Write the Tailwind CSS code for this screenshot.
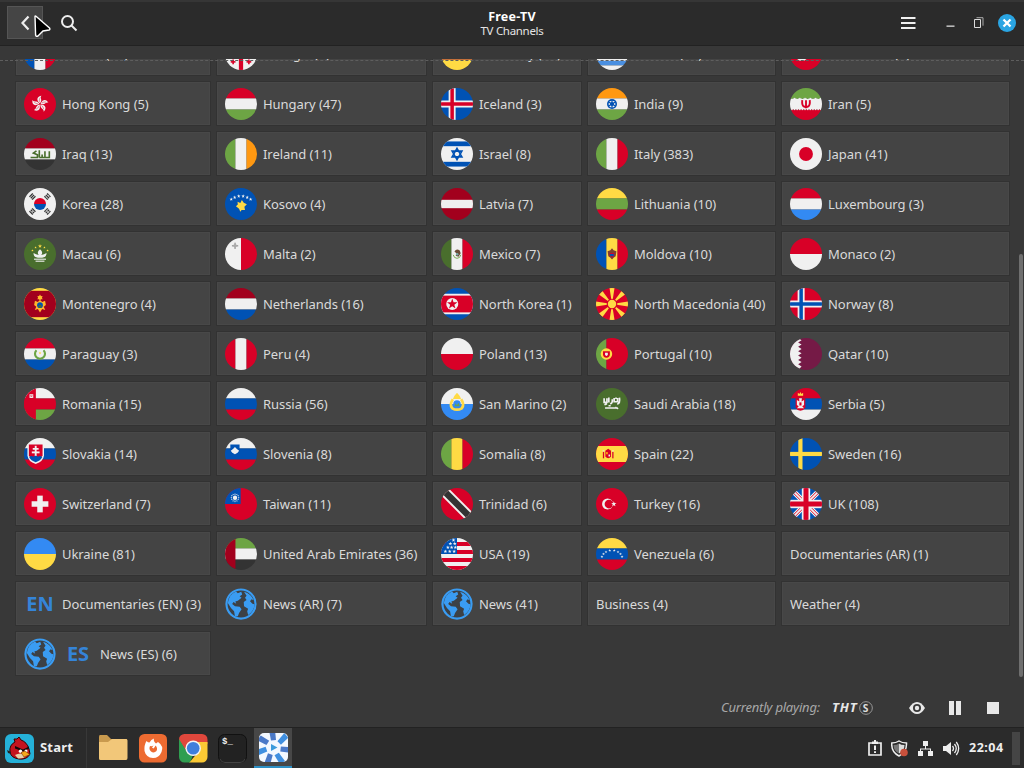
<!DOCTYPE html>
<html lang="en">
<head>
<meta charset="utf-8">
<title>Free-TV</title>
<script src="https://cdn.jsdelivr.net/npm/@tailwindcss/browser@4"></script>
</head>
<body class="w-[1024px] h-[768px] overflow-hidden bg-[#383838] font-['Noto_Sans','Liberation_Sans',sans-serif] text-[#dadada] flex flex-col">

<header class="h-[46px] shrink-0 bg-[#2b2b2b] border-t-2 border-t-[#363636] border-b border-b-[#222] grid grid-cols-[1fr_auto_1fr] items-center">
  <div class="flex items-center h-full pl-[7px] pb-[2px]">
    <button class="relative w-[36px] h-[33px] bg-[#454545] border border-[#555] flex items-center justify-center">
      <svg class="w-4 h-4" viewBox="0 0 16 16" fill="none" stroke="#eee" stroke-width="2.2"><path d="M11.500 1.500 5.500 8 11.500 14.500"/></svg>
      <svg class="absolute left-[25px] top-[7px] w-[20px] h-[26px]" viewBox="0 0 20 26"><path d="M2 2.500Q2 1.500 3 2.200L16.500 14Q17.500 15.500 16 16L10 17 5 22Q3 23 2.600 21Z" fill="#000" stroke="#fff" stroke-width="1.400"/></svg>
    </button>
    <svg class="ml-[17px] w-[18px] h-[18px]" viewBox="0 0 18 18" fill="none" stroke="#eee" stroke-width="2"><circle cx="7.500" cy="7.500" r="5.500"/><path d="m11.500 11.500 5 5"/></svg>
  </div>
  <div class="text-center">
    <div class="text-[12.500px] leading-[14px] font-bold tracking-[0.25px] text-white">Free-TV</div>
    <div class="text-[11.500px] leading-[14px] tracking-[-0.3px] text-[#e4e4e4]">TV Channels</div>
  </div>
  <div class="flex items-center justify-end pr-[8px] h-full pb-[2px]">
    <svg class="w-[15px] h-[12px] mr-[30px]" viewBox="0 0 15 12" fill="#f0f0f0"><path d="M0 0h14.500v2H0zM0 5h14.500v2H0zM0 10h14.500v2H0z"/></svg>
    <svg class="w-[9px] h-[10px] mr-[18px]" viewBox="0 0 9 10" fill="#ddd"><path d="M0.500 7.500h8v1.300h-8z"/></svg>
    <svg class="w-[11px] h-[12px] mr-[14px]" viewBox="0 0 11 12" fill="none" stroke="#ddd"><path d="M1.500 2.500h6v8h-6z"/><path d="M3.500 .7h6.500v8" stroke="#aaa"/></svg>
    <svg class="w-[18px] h-[18px]" viewBox="0 0 18 18"><circle cx="9" cy="9" r="9" fill="#2aa5e3"/><path d="m5.500 5.500 7 7m0-7-7 7" stroke="#fff" stroke-width="2.300"/></svg>
  </div>
</header>

<main class="flex-1 min-h-0 pt-[13px] flex flex-col">
  <div class="relative h-[625px] overflow-hidden pl-4">
    <div class="absolute inset-x-0 top-[1px] border-t border-dashed border-[#5e5e5e]"></div>
    <div id="grid" class="-mt-[27px] grid grid-cols-[194px_209px_148px_187px_227px] auto-rows-[43px] gap-[7px]"></div>
    <div class="absolute right-[1px] top-[195px] w-[4px] h-[423px] rounded-full bg-[#6f6f6f]"></div>
  </div>
  <div class="flex-1 flex items-center justify-end pr-[25px] pt-[5px]">
    <span class="text-[13px] italic text-[#a8a8a8] w-[99px] whitespace-nowrap tracking-[-0.2px]">Currently playing:</span>
    <span class="ml-[12px] w-[43px] text-[13px] italic font-bold text-[#e6e6e6] whitespace-nowrap tracking-[0.8px] flex items-center gap-[2px]">THT
      <svg class="w-[14px] h-[14px] shrink-0" viewBox="0 0 13 13"><circle cx="6.500" cy="6.500" r="5.900" fill="none" stroke="#999" stroke-width=".9"/><text x="3.500" y="10" font-size="9.500" font-style="normal" font-weight="bold" letter-spacing="0" fill="#ddd">S</text></svg></span>
    <svg class="ml-[34px] w-[16px] h-[14px]" viewBox="0 0 16 14"><path d="M0 7Q3.500 1 8 1t8 6Q12.500 13 8 13T0 7Z" fill="#e8e8e8"/><circle cx="8" cy="7" r="4" fill="#383838"/><circle cx="8" cy="7" r="2.200" fill="#e8e8e8"/></svg>
    <svg class="ml-[24px] w-[12px] h-[14px]" viewBox="0 0 12 14" fill="#e8e8e8"><path d="M0 0h5v14H0zM7 0h5v14H7z"/></svg>
    <svg class="ml-[26px] w-[12px] h-[12px]" viewBox="0 0 12 12" fill="#e8e8e8"><path d="M0 0h12v12H0z"/></svg>
  </div>
</main>

<footer class="h-[41px] shrink-0 bg-[#2b2b2b] border-t border-[#222] flex items-center">
  <svg class="ml-[5px] w-[29px] h-[29px]" viewBox="0 0 29 29"><rect width="29" height="29" rx="6" fill="#25b1d8"/><path d="M5 18Q4 11 10 8L9 5 12 5 14 3 16 6Q22 8 24 15L25 20Q22 26 14 25 6 24 5 18Z" fill="#c4141f" stroke="#300" stroke-width="1"/><path d="M10 21Q15 18 22 21 19 25 13 24.500Z" fill="#e8d0a8"/><path d="M10 12 18 15.500 24 12.500 24 14.500 18 17.500 10 14.500Z" fill="#140808"/><circle cx="15.500" cy="17.300" r="1.700" fill="#fff"/><circle cx="21" cy="17" r="1.500" fill="#fff"/><path d="M16 18.500 20 17 25 20.500 19 23Z" fill="#f5a81c" stroke="#5a2a00" stroke-width=".5"/><path d="m2 16 4 2v2l-3-1z" fill="#222"/></svg>
  <span class="ml-[6px] w-[46px] text-[13px] font-bold tracking-[0.2px] text-[#eee]">Start</span>
  <div class="w-px h-full bg-[#383838]"></div>
  <svg class="ml-[12px] w-[29px] h-[29px]" viewBox="0 0 29 29"><path d="M0 3Q0 1 1 1H8L12 5H28V12H0Z" fill="#c99a4e"/><path d="M0 8H9L13 5H27Q28.500 5 28.500 6.500V24Q28.500 26 27 26H1.500Q0 26 0 24.500Z" fill="#f2c779"/></svg>
  <svg class="ml-[11px] w-[29px] h-[29px]" viewBox="0 0 29 29"><rect width="28" height="28.500" rx="5.500" fill="#ed6b31"/><path d="M7.500 7Q9 8.500 10.500 8.500 12 5.500 15 4.500 14 7 17 9.500L19 8Q25 12 22.500 18 20 24 14 24 7 23.500 5.500 17 5 11 7.500 7Z" fill="#fff"/><path d="M11 12Q13 12.500 14.500 11.500L13 13.500Q13.500 14 14.500 14.500 16 13 16.500 11.500 19 14 17.500 17 15 19.500 12 17.500 9.500 15 11 12Z" fill="#ed6b31"/></svg>
  <svg class="ml-[11px] w-[29px] h-[29px]" viewBox="0 0 29 29"><defs><clipPath id="cr"><rect width="28.500" height="28.500" rx="5.500"/></clipPath></defs><g clip-path="url(#cr)"><path d="M0 0H29V10H14L7 17 0 6Z" fill="#e0473c"/><path d="M0 5 8 18 14 21 11 29H0Z" fill="#2f9e50"/><path d="M14 8H29V29H10L20 17Z" fill="#fbc934"/></g><circle cx="14.200" cy="14.200" r="7.800" fill="#f4f4f4"/><circle cx="14.200" cy="14.200" r="6.300" fill="#3f7fdc"/></svg>
  <svg class="ml-[10px] w-[29px] h-[29px]" viewBox="0 0 29 29"><rect x=".5" y=".5" width="28" height="28" rx="6" fill="#222" stroke="#111"/><path d="M2 25Q3 28.500 7 28.500H22Q26 28.500 27 25" fill="none" stroke="#444"/><text x="4" y="9.500" font-size="9" font-weight="bold" fill="#eee" font-family="Liberation Mono">$_</text></svg>
  <div class="ml-[7px] w-[38px] h-full bg-[#474747] border-b-2 border-[#2d8fc4] flex justify-center items-center">
    <svg class="w-[29px] h-[29px]" viewBox="0 0 29 29"><defs><clipPath id="hy"><rect width="29" height="29" rx="5"/></clipPath></defs><g clip-path="url(#hy)"><path d="M0 0H29V29H0Z" fill="#f3f8ff"/><g id="blades"></g><path d="m12 11 6.500 3.500-6.500 3.500z" fill="#3c9bdc"/></g></svg>
  </div>
  <div class="flex-1"></div>
  <svg class="w-[14px] h-[16px]" viewBox="0 0 14 16"><path d="M1 3H13V15H1Z" fill="none" stroke="#eee" stroke-width="1.700"/><path d="M4 1.500H6V0H8V1.500H10V4H4Z" fill="#eee"/><path d="M6 5.500H8V10H6ZM6 11.200H8V13H6Z" fill="#eee"/></svg>
  <svg class="ml-[9px] w-[18px] h-[17px]" viewBox="0 0 18 17"><path d="M8 1Q11 3 15.500 3 16 12 8 16 0 12 .8 3 5 3 8 1Z" fill="none" stroke="#eee" stroke-width="1.500"/><path d="M8 3.500Q10 5 13.500 5 13.500 11 8 13.500Z" fill="#ddd"/><path d="M8 3.500Q6 5 2.500 5 2.500 11 8 13.500Z" fill="#777"/><circle cx="13" cy="12.500" r="3.800" fill="#c9513c"/></svg>
  <svg class="ml-[9px] w-[15px] h-[15px]" viewBox="0 0 15 15" fill="#eee"><path d="M5 0h5v5H5zM0 10h5v5H0zM10 10h5v5h-5zM7 5h1v2.500h5V10h-1V8.500H3V10H2V7.500h5z"/></svg>
  <svg class="ml-[10px] w-[17px] h-[15px]" viewBox="0 0 17 15"><path d="M0 5H3L8 1V14L3 10H0Z" fill="#eee"/><path d="M9.500 5Q11.500 7.500 9.500 10M11.500 3Q15 7.500 11.500 12M13.300 1Q18 7.500 13.300 14" fill="none" stroke="#eee" stroke-width="1.300"/></svg>
  <span class="ml-[9px] w-[36px] text-[12.500px] font-bold tracking-[0.5px] text-[#eee] whitespace-nowrap">22:04</span>
  <div class="ml-[7px] mr-[4px] w-[8px] h-[33px] bg-[#454545]"></div>
</footer>

<script>
const R='#d80027',W='#f0f0f0',G='#6da544',B='#0052b4',Y='#ffda44',O='#ff9811',D='#a2001d',L='#338af3',F='#496e2d',K='#333';
const r=(x,y,w,h,c)=>`<rect x="${x}" y="${y}" width="${w}" height="${h}" fill="${c}"/>`;
const bg=c=>r(0,0,512,512,c);
const h3=(a,b,c)=>r(0,0,512,168,a)+r(0,167,512,178,b)+r(0,345,512,167,c);
const v3=(a,b,c)=>r(0,0,168,512,a)+r(167,0,178,512,b)+r(345,0,167,512,c);
const h2=(a,b)=>r(0,0,512,256,a)+r(0,256,512,256,b);
const ci=(x,y,q,c)=>`<circle cx="${x}" cy="${y}" r="${q}" fill="${c}"/>`;
const p=(d,c)=>`<path d="${d}" fill="${c}"/>`;
const l=(d,c,w)=>`<path d="${d}" fill="none" stroke="${c}" stroke-width="${w}"/>`;
const star=(x,y,q,c,n=5,k=.4)=>{let s='';for(let i=0;i<2*n;i++){const a=Math.PI*i/n-Math.PI/2,t=i%2?q*k:q;s+=`${(x+t*Math.cos(a)).toFixed(1)},${(y+t*Math.sin(a)).toFixed(1)} `}return `<polygon points="${s}" fill="${c}"/>`};
const rot=(n,f)=>Array.from({length:n},(_,i)=>`<g transform="rotate(${i*360/n} 256 256)">${f}</g>`).join('');
const nordic=(a,b,c)=>bg(a)+r(122,0,112,512,b)+r(0,200,512,112,b)+r(150,0,56,512,c)+r(0,228,512,56,c);
const barbs=(x,y,a,b)=>`<g transform="rotate(${a} ${x} ${y})">`+[-30,0,30].map((d,i)=>r(x-38,y+d-10,76,20,K)+(b&(1<<i)?r(x-5,y+d-10,10,20,W):'')).join('')+'</g>';

const flags={
fr:v3(B,W,R),
ge:bg(W)+r(222,0,68,512,R)+r(0,222,512,68,R)+[130,382].map(x=>[130,382].map(y=>r(x-38,y-13,76,26,R)+r(x-13,y-38,26,76,R)).join('')).join(''),
de:h3(K,R,Y),
gr:Array.from({length:7},(_,i)=>r(0,i*73.2,512,74,i%2?'#4a8fe0':W)).join(''),
gl:h2(W,R)+ci(190,256,110,R)+p('M80 256a110 110 0 0 0 220 0z',W),
hk:bg(R)+rot(5,p('M250 240C190 190 210 130 280 122 245 155 305 185 256 245Z',W)+l('M250 220C240 190 250 170 258 155',R,7)),
hu:h3(R,W,G),
is:nordic(B,W,R),
in:h3(O,W,G)+ci(256,256,80,B)+ci(256,256,54,W)+ci(256,256,32,B)+rot(6,r(250,195,12,122,B)),
ir:h3(G,W,R)+Array.from({length:12},(_,i)=>r(20+i*42,158,22,18,i%2?W:G)+r(20+i*42,336,22,18,W)).join('')+l('M196 195Q185 285 230 300H282Q327 285 316 195M256 195V325',R,30),
iq:h3(D,W,K)+l('M105 312H215V270L150 240 200 205M245 195V312M245 312H335M335 210V312M290 265V312M335 312H405V210',F,26),
ie:v3(G,W,O),
il:bg(W)+r(0,55,512,76,B)+r(0,381,512,76,B)+l('M256 165 335 302H177ZM256 347 177 210H335Z',B,25),
it:v3(G,W,R),
jp:bg(W)+ci(256,256,111,R),
kr:bg(W)+p('M160 256a96 96 0 0 1 192 0z',R)+p('M160 256a96 96 0 0 0 192 0z',B)+barbs(135,137,-45,0)+barbs(375,137,45,5)+barbs(135,375,45,2)+barbs(375,375,-45,7),
xk:bg(B)+[[100,180],[155,150],[220,130],[290,130],[355,150],[410,180]].map(a=>star(a[0],a[1],30,W)).join('')+p('M200 220 245 240 270 190 300 235 350 260 310 300 320 350 265 350 245 380 225 330 175 290 205 265Z',Y),
lv:bg(D)+r(0,189,512,134,W),
lt:h3(Y,G,R),
lu:h3(R,W,L),
mo:bg(F)+p('M256 180Q315 225 275 272 325 265 360 240 360 310 290 315H222Q152 310 152 240 190 265 237 272 197 225 256 180Z',W)+r(160,330,192,18,W)+r(185,362,142,18,W)+star(256,130,34,Y)+star(185,150,20,Y)+star(327,150,20,Y)+star(135,200,20,Y)+star(377,200,20,Y),
mt:r(0,0,256,512,W)+r(256,0,256,512,R)+r(150,75,22,100,'#999')+r(111,114,100,22,'#999')+ci(161,125,28,'#aaa'),
mx:v3(F,W,R)+l('M195 270Q210 325 256 325 305 325 317 270',G,14)+p('M215 220Q245 160 300 200L315 245 280 300 235 285 250 245Z','#6b4a35')+ci(260,260,20,'#7aa'),
md:v3(B,Y,R)+p('M185 210 230 195 256 165 282 195 327 210 315 290 285 310 256 345 227 310 197 290Z','#7f3f33')+p('M220 240H292V280L256 315 220 280Z',R)+r(225,255,60,35,B),
mc:h2(R,W),
me:bg(Y)+r(0,45,512,422,D)+star(256,155,50,'#ffb72b',6,.6)+p('M175 205 220 225 256 190 292 225 337 205 350 270 315 300 340 350 290 335 256 390 222 335 172 350 197 300 162 270Z','#ffb72b')+ci(256,275,46,B)+ci(256,293,24,F),
nl:h3(D,W,B),
kp:bg(B)+r(0,92,512,328,W)+r(0,122,512,268,R)+ci(180,256,96,W)+star(180,256,88,R),
mk:bg(R)+rot(8,p('M256 256 216 0H296Z',Y))+ci(256,256,85,R)+ci(256,256,67,Y),
no:nordic(R,W,B),
py:h3(R,W,B)+l('M200 195A80 80 0 1 0 312 195',G,34)+star(256,240,25,Y),
pe:v3(R,W,R),
pl:h2(W,R),
pt:r(0,0,168,512,G)+r(167,0,345,512,R)+ci(167,256,92,Y)+p('M112 210H222V265Q220 312 167 316 114 312 112 265Z',R)+p('M145 235H189V265Q185 285 167 289 149 285 145 265Z',W),
qa:bg('#751a46')+p('M0 0H130L185 35 130 70 185 105 130 140 185 175 130 210 185 245 130 280 185 315 130 350 185 385 130 420 185 455 130 512H0Z',W),
om:h3(W,R,G)+r(0,0,190,512,R)+r(88,100,60,60,W)+l('M100 112 136 148M136 112 100 148',R,8),
ru:h3(W,B,R),
sm:h2(W,L)+l('M190 180Q130 265 180 325 256 370 332 325 382 265 322 180',Y,44)+p('M190 175 215 125 256 75 297 125 322 175Z',Y)+ci(256,256,60,L)+p('M215 290 235 245 256 280 277 235 300 290Z',G),
sa:bg(F)+l('M130 165V230H175V165M205 150V230M225 250Q268 250 260 180M290 160V220H345V160M375 155Q390 245 340 260M135 268 175 250M320 150V175',W,27)+l('M145 320H350M310 305Q345 340 350 318M200 285H235',W,24),
rs:h3(R,B,W)+p('M90 165H245V310Q225 350 167 365 108 350 90 310Z',R)+p('M110 190 150 215 145 165H190L185 215 225 190V270L195 290 225 325H110L140 290 110 270Z',W)+p('M125 75 150 95 167 65 184 95 210 75V125H125Z',Y)+r(150,230,34,50,R),
sk:h3(W,B,R)+p('M55 90H320V280Q310 375 187 415 65 375 55 280Z',W)+p('M78 102H297V280Q290 315 187 325 85 315 78 280Z',R)+r(172,125,30,165,W)+r(140,160,94,28,W)+r(125,215,124,30,W)+p('M82 305Q120 275 150 300 187 265 224 300 255 275 292 305 265 365 187 388 110 365 82 305Z',B),
si:h3(W,B,R)+p('M85 105H233V185Q225 240 159 260 95 240 85 185Z',B)+p('M92 205 128 175 159 145 190 175 226 205Q210 240 159 260 108 240 92 205Z',W),
ml:v3(G,Y,R),
es:bg(R)+r(0,128,512,256,Y)+r(110,220,20,105,R)+r(260,220,20,105,R)+p('M150 205 195 170 240 205V300Q195 345 150 300Z',R)+r(160,225,30,35,O)+r(200,265,25,30,W)+r(105,200,30,15,W)+r(255,200,30,15,W),
se:bg(B)+r(133,0,67,512,Y)+r(0,222,512,67,Y),
ch:bg(R)+r(212,122,88,268,W)+r(122,212,268,88,W),
tw:bg(R)+r(0,0,250,256,B)+star(160,155,75,W,12,.65)+ci(160,155,50,B)+ci(160,155,35,W),
tt:bg(R)+l('M20 20 492 492',W,165)+l('M20 20 492 492',K,104),
tr:bg(R)+ci(185,256,88,W)+ci(208,256,70,R)+star(285,256,45,W),
gb:bg(B)+l('M0 0 512 512M512 0 0 512',W,86)+l('M-14 14 498 526M14 -14 526 498M526 14 14 526M498 -14 -14 498',R,15)+r(189,0,134,512,W)+r(0,189,512,134,W)+r(216,0,80,512,R)+r(0,216,512,80,R),
ua:h2(L,Y),
ae:h3(G,W,K)+r(0,0,167,512,D),
us:bg(W)+[0,1,2,3].map(i=>r(0,64+i*128,512,64,R)).join('')+r(0,0,256,256,B)+[[150,90],[220,90],[110,150],[170,150],[230,150],[70,215],[140,215],[210,215],[200,35]].map(a=>star(a[0],a[1],32,W)).join(''),
ve:h3(Y,B,R)+[[95,300],[120,255],[160,222],[220,200],[292,200],[352,222],[392,255],[417,300]].map(a=>star(a[0],a[1],24,W)).join(''),
globe:ci(256,256,250,'#3a9cf2')+ci(256,256,215,'#3c4146')+p('M45 240Q60 105 175 55L205 85 260 60 275 105 235 130 265 155 205 205 165 215 180 250 135 225 115 255 160 290 235 300 265 340 225 400 205 450 160 455 145 370 95 320Z','#3a9cf2')+p('M305 60Q420 95 460 195L425 180 400 210 440 250 470 260Q470 340 410 400L370 430 355 370 370 330 305 290 300 225 345 190 320 155 345 125Z','#3a9cf2')
};
const rows=[
['fr','France (13)'],['ge','Georgia (1)'],['de','Germany (19)'],['gr','Greece (18)'],['gl','Greenland (1)'],
['hk','Hong Kong (5)'],['hu','Hungary (47)'],['is','Iceland (3)'],['in','India (9)'],['ir','Iran (5)'],
['iq','Iraq (13)'],['ie','Ireland (11)'],['il','Israel (8)'],['it','Italy (383)'],['jp','Japan (41)'],
['kr','Korea (28)'],['xk','Kosovo (4)'],['lv','Latvia (7)'],['lt','Lithuania (10)'],['lu','Luxembourg (3)'],
['mo','Macau (6)'],['mt','Malta (2)'],['mx','Mexico (7)'],['md','Moldova (10)'],['mc','Monaco (2)'],
['me','Montenegro (4)'],['nl','Netherlands (16)'],['kp','North Korea (1)'],['mk','North Macedonia (40)'],['no','Norway (8)'],
['py','Paraguay (3)'],['pe','Peru (4)'],['pl','Poland (13)'],['pt','Portugal (10)'],['qa','Qatar (10)'],
['om','Romania (15)'],['ru','Russia (56)'],['sm','San Marino (2)'],['sa','Saudi Arabia (18)'],['rs','Serbia (5)'],
['sk','Slovakia (14)'],['si','Slovenia (8)'],['ml','Somalia (8)'],['es','Spain (22)'],['se','Sweden (16)'],
['ch','Switzerland (7)'],['tw','Taiwan (11)'],['tt','Trinidad (6)'],['tr','Turkey (16)'],['gb','UK (108)'],
['ua','Ukraine (81)'],['ae','United Arab Emirates (36)'],['us','USA (19)'],['ve','Venezuela (6)'],['','Documentaries (AR) (1)'],
['EN','Documentaries (EN) (3)'],['globe','News (AR) (7)'],['globe','News (41)'],['','Business (4)'],['','Weather (4)'],
['globe,ES','News (ES) (6)']];
const icon=k=>flags[k]?`<svg class="w-8 h-8 shrink-0 rounded-full" viewBox="0 0 512 512">${flags[k]}</svg>`
 :`<span class="w-8 shrink-0 text-center text-[20px] leading-8 font-bold text-[#3584d8]">${k}</span>`;
document.getElementById('grid').innerHTML=rows.map(([k,t])=>`<div class="flex items-center gap-[6px] pl-[7px] bg-[#444] border border-[#484848] shadow-[0_0_0_1px_#323232]">${k?k.split(',').map(icon).join(''):''}<span class="text-[13px] leading-4 tracking-[-0.06px] whitespace-nowrap">${t}</span></div>`).join('');
document.getElementById('blades').innerHTML=Array.from({length:7},(_,i)=>`<path transform="rotate(${i*360/7} 14.5 14.5)" d="M12 7.500 17 7 16 -3 10 -3Z" fill="${i%2?'#3f8fe0':'#4a79c8'}"/>`).join('');
</script>
</body>
</html>
